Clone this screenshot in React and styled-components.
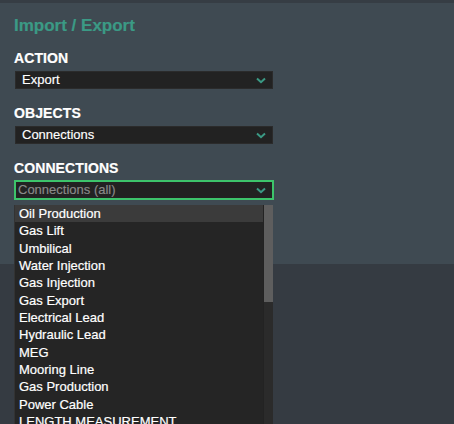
import React from "react";
import styled, { createGlobalStyle } from "styled-components";

const Global = createGlobalStyle`
  html, body { margin: 0; padding: 0; }
  body {
    background: #353b42;
    font-family: "Liberation Sans", Arial, Helvetica, sans-serif;
    -webkit-font-smoothing: antialiased;
  }
`;

const Page = styled.div`
  width: 454px;
  height: 424px;
  overflow: hidden;
  background: #353b42;
  position: relative;
`;

const Panel = styled.div`
  border-top: 3px solid #363d44;
  background: #3f4a52;
  padding: 13px 14px 0 14px;
  box-sizing: border-box;
  height: 264px;
`;

const Title = styled.h2`
  margin: 0;
  font-size: 17px;
  line-height: 20px;
  font-weight: 700;
  color: #3b9a85;
  -webkit-text-stroke: 0.2px #3b9a85;
`;

const Fields = styled.div`
  display: flex;
  flex-direction: column;
  gap: 16px;
  margin-top: 14px;
`;

const Field = styled.div`
  display: flex;
  flex-direction: column;
  gap: 5px;
  position: relative;
`;

const Label = styled.div`
  font-size: 14px;
  line-height: 16px;
  font-weight: 700;
  color: #ffffff;
  letter-spacing: 0.1px;
  -webkit-text-stroke: 0.2px #ffffff;
`;

const Select = styled.div`
  width: 258px;
  height: 18px;
  margin-left: 1px;
  box-sizing: border-box;
  background: #222222;
  border: 1px solid ${(p) => (p.$focused ? "#3dc46b" : "#2b2b2b")};
  box-shadow: ${(p) => (p.$focused ? "0 0 0 1px #3dc46b" : "none")};
  display: flex;
  align-items: center;
  justify-content: space-between;
  padding: 0 6px 0 ${(p) => (p.$placeholder ? "2px" : "6px")};
  font-size: 13px;
  line-height: 16px;
  color: ${(p) => (p.$placeholder ? "#8a8a8a" : "#ffffff")};
  -webkit-text-stroke: 0.15px ${(p) => (p.$placeholder ? "#8a8a8a" : "#ffffff")};
`;

const Chevron = () => (
  <svg width="10" height="7" viewBox="0 0 10 7" style={{ flexShrink: 0 }}>
    <path d="M1 1.5 L5 5.2 L9 1.5" fill="none" stroke="#3b9a85" strokeWidth="2" />
  </svg>
);

const Menu = styled.div`
  position: absolute;
  left: 1px;
  top: 45px;
  width: 258px;
  height: 240px;
  background: #252525;
  display: flex;
  z-index: 5;
  box-shadow: -1px 0 0 #333;
`;

const Items = styled.ul`
  list-style: none;
  margin: 0;
  padding: 0;
  flex: 1;
`;

const Item = styled.li`
  height: 17.33px;
  line-height: 17.33px;
  padding-left: 4px;
  font-size: 13px;
  color: #ffffff;
  -webkit-text-stroke: 0.2px #ffffff;
  white-space: nowrap;
  background: ${(p) => (p.$active ? "#3b3b3b" : "transparent")};
`;

const Track = styled.div`
  width: 9px;
  background: #2b2b2b;
  border-left: 1px solid #232323;
  display: flex;
  flex-direction: column;
`;

const Thumb = styled.div`
  height: 97px;
  background: #5e5e5e;
`;

const items = [
  "Oil Production",
  "Gas Lift",
  "Umbilical",
  "Water Injection",
  "Gas Injection",
  "Gas Export",
  "Electrical Lead",
  "Hydraulic Lead",
  "MEG",
  "Mooring Line",
  "Gas Production",
  "Power Cable",
  "LENGTH MEASUREMENT",
  "Other",
];

export default function App() {
  return (
    <Page>
      <Global />
      <Panel>
        <Title>Import / Export</Title>
        <Fields>
          <Field>
            <Label>ACTION</Label>
            <Select>
              <span>Export</span>
              <Chevron />
            </Select>
          </Field>
          <Field>
            <Label>OBJECTS</Label>
            <Select>
              <span>Connections</span>
              <Chevron />
            </Select>
          </Field>
          <Field>
            <Label>CONNECTIONS</Label>
            <Select $focused $placeholder>
              <span>Connections (all)</span>
              <Chevron />
            </Select>
            <Menu>
              <Items>
                {items.map((t, i) => (
                  <Item key={t} $active={i === 0}>
                    {t}
                  </Item>
                ))}
              </Items>
              <Track>
                <Thumb />
              </Track>
            </Menu>
          </Field>
        </Fields>
      </Panel>
    </Page>
  );
}
